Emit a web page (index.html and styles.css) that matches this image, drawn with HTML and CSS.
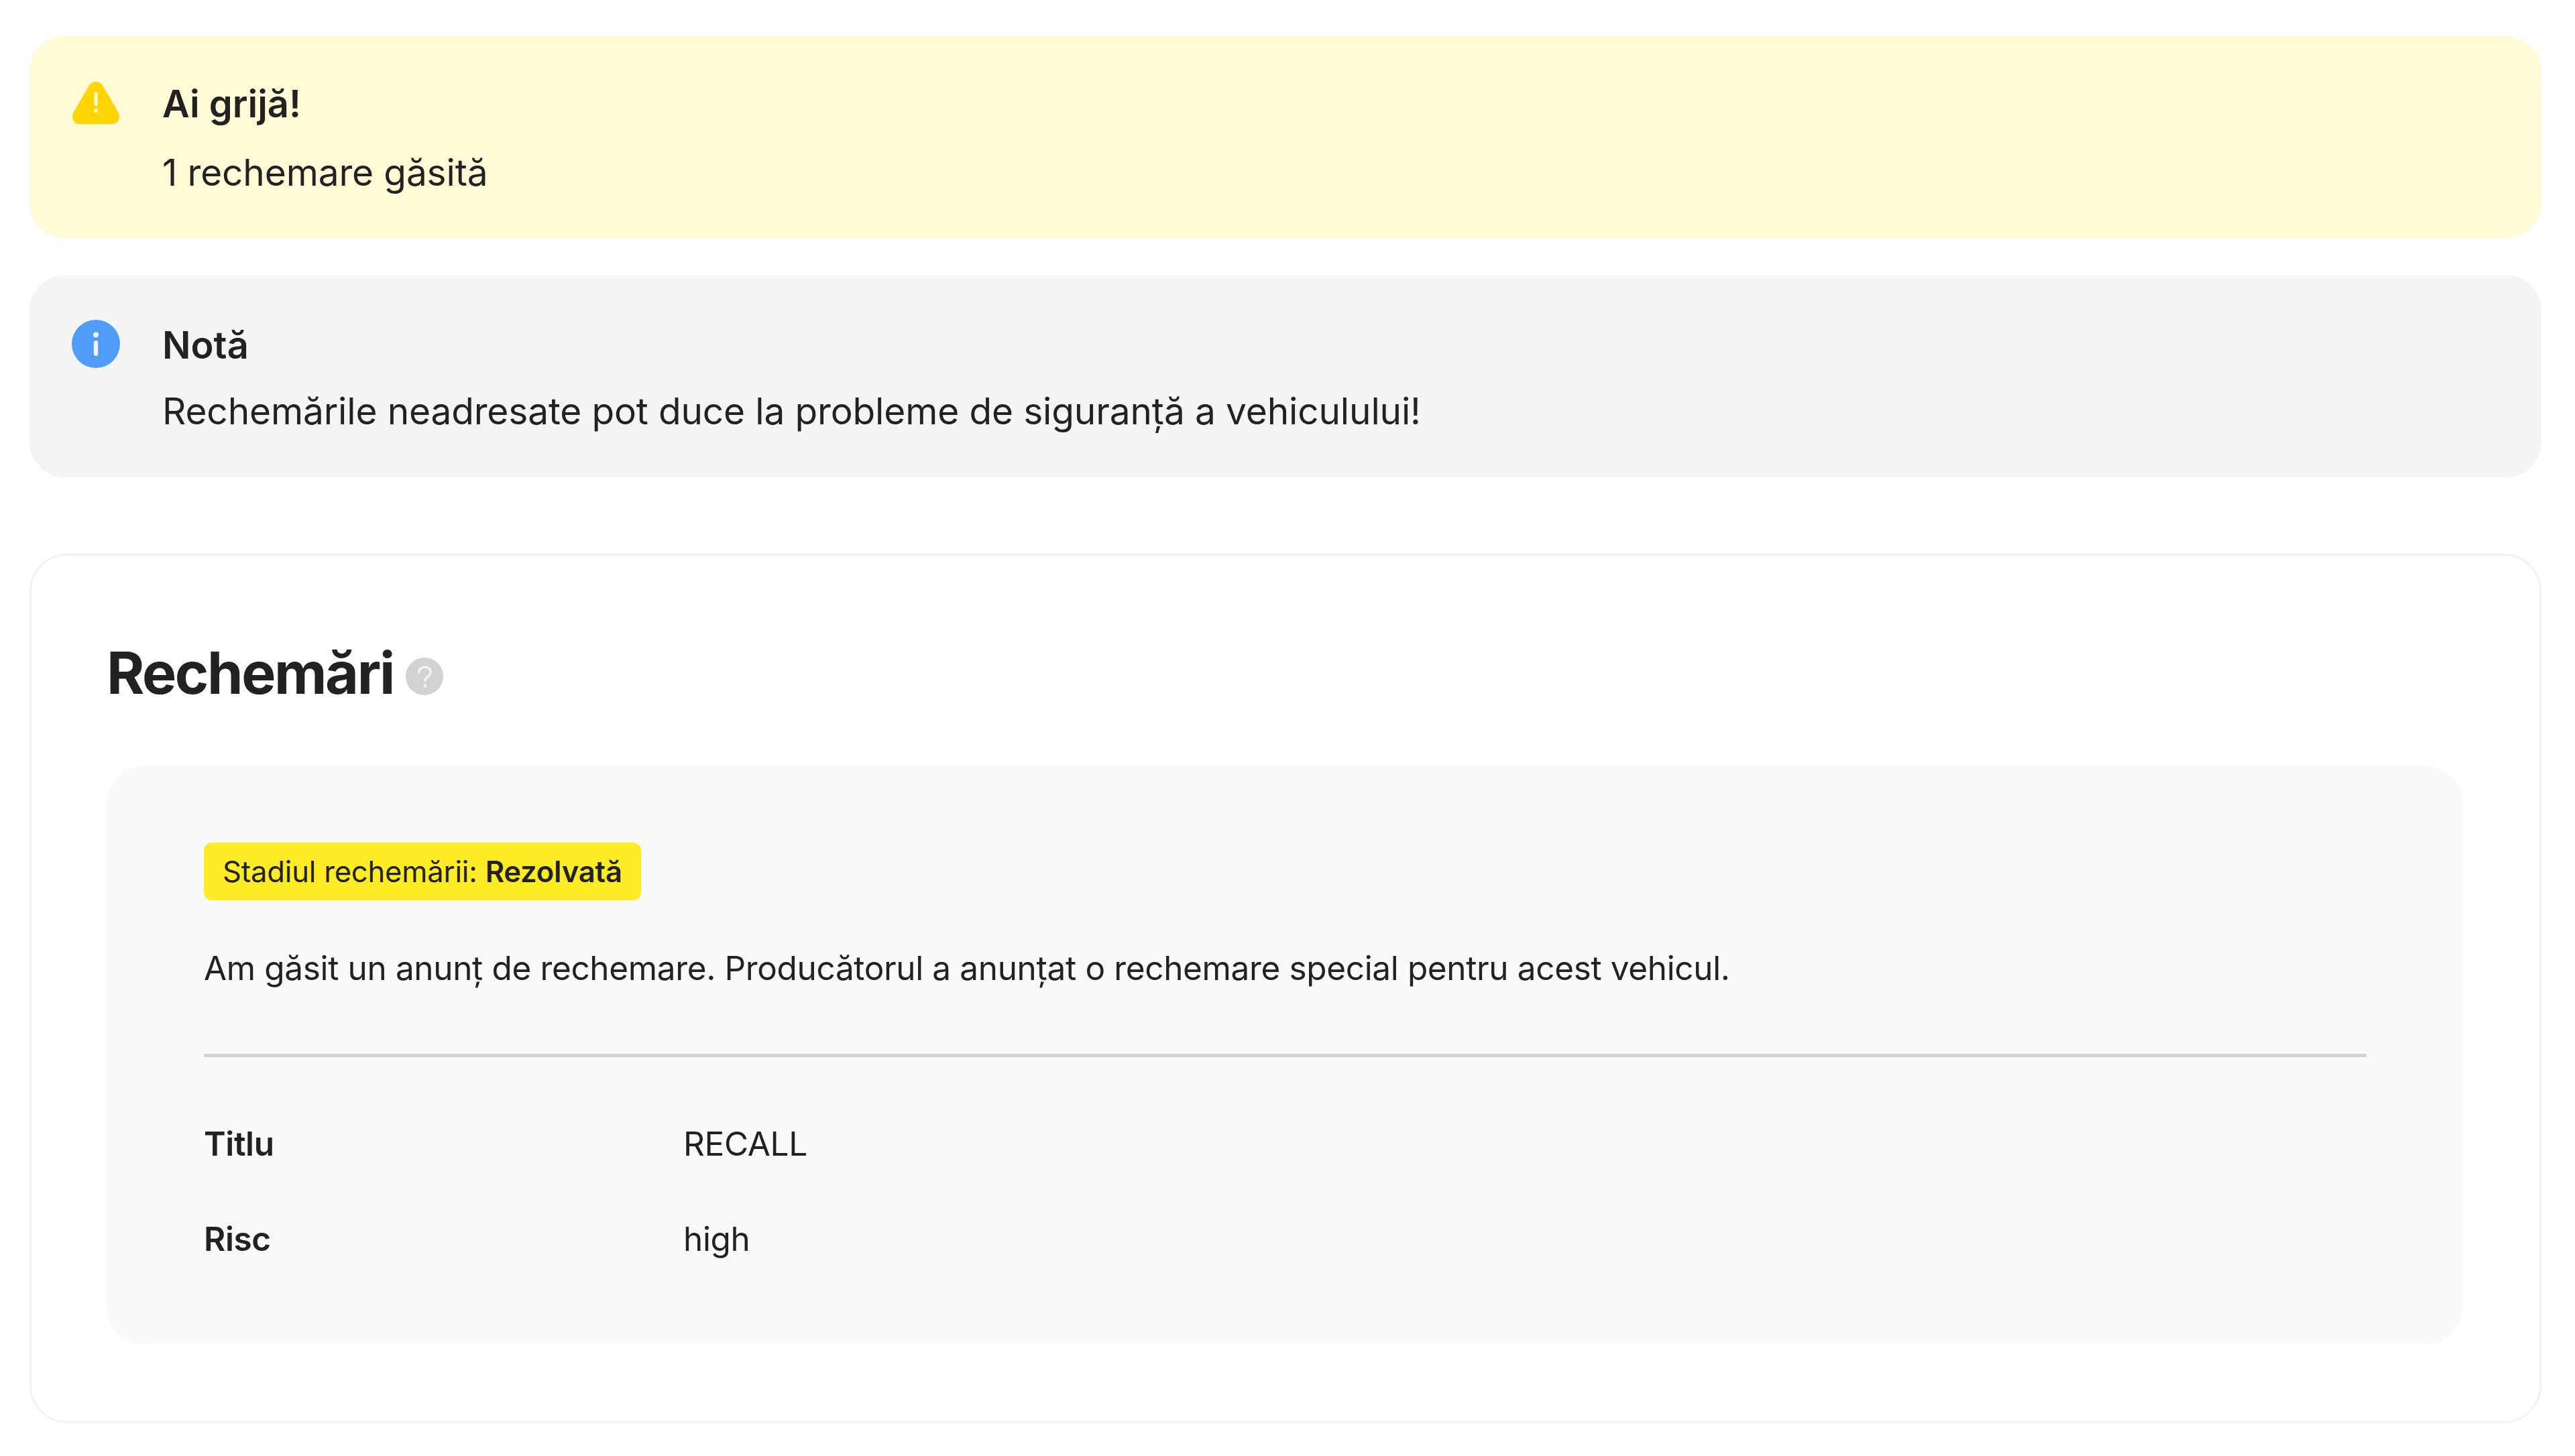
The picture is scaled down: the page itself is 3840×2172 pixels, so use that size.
FILE: index.html
```html
<!doctype html>
<html lang="ro">
<head>
  <meta charset="UTF-8">
  <title>Rechemări</title>
  <link rel="stylesheet" href="styles.css">
</head>
<body>
  <div class="alert alert-warn">
    <svg class="alert-icon" viewBox="0 0 72 72">
      <path d="M36 4c-5 0-8.500 2.500-11 7L3 49c-4.500 8-1 18 9 18h48c10 0 13.500-10 9-18L47 11c-2.500-4.500-6-7-11-7z" fill="#ffd400"/>
      <rect x="33.500" y="19" width="5" height="21" rx="2" fill="#fffbd6"/>
      <rect x="33.500" y="44" width="5" height="6" rx="1.500" fill="#fffbd6"/>
    </svg>
    <div class="alert-body">
      <div class="alert-title">Ai grijă!</div>
      <div class="alert-text">1 rechemare găsită</div>
    </div>
  </div>
  <div class="alert alert-info">
    <svg class="alert-icon" viewBox="0 0 72 72">
      <circle cx="36" cy="36" r="36" fill="#4f9cf9"/>
      <circle cx="36" cy="22.500" r="4" fill="#f4f4f4"/>
      <rect x="32.800" y="31" width="6.400" height="23" rx="3.200" fill="#f4f4f4"/>
    </svg>
    <div class="alert-body">
      <div class="alert-title">Notă</div>
      <div class="alert-text">Rechemările neadresate pot duce la probleme de siguranță a vehiculului!</div>
    </div>
  </div>
  <div class="card">
    <h2 class="card-title">Rechemări
      <svg class="help-icon" viewBox="0 0 56 56">
        <circle cx="28" cy="28" r="28" fill="#d2d2d2"/>
        <path d="M19.500 22c.5-5 4-8 8.800-8 5 0 8.700 3 8.700 7.500 0 3.500-2 5.200-4.500 7-2.300 1.700-3.500 3-3.500 6" fill="none" stroke="#f4f4f4" stroke-width="3.400" stroke-linecap="round"/>
        <circle cx="28.800" cy="42" r="2.400" fill="#f4f4f4"/>
      </svg>
    </h2>
    <div class="recall">
      <div class="status">Stadiul rechemării: <b>Rezolvată</b></div>
      <p class="recall-desc">Am găsit un anunț de rechemare. Producătorul a anunțat o rechemare special pentru acest vehicul.</p>
      <hr class="divider">
      <div class="row"><span class="row-label">Titlu</span><span>RECALL</span></div>
      <div class="row"><span class="row-label">Risc</span><span>high</span></div>
    </div>
  </div>
</body>
</html>
```

FILE: styles.css
```css
body {
  margin: 0;
  padding: 54px 50px 0 44px;
  background: #fff;
  color: #222;
  font-family: Inter, "Noto Sans", sans-serif;
}

.alert {
  display: flex;
  gap: 63px;
  height: 301px;
  box-sizing: border-box;
  padding: 66px 64px 0 63px;
  border-radius: 52px;
  margin-bottom: 56px;
}

.alert-warn {
  padding-top: 63px;
  background: #fffbd6;
}

.alert-info {
  background: #f4f4f4;
}

.alert-icon {
  flex: none;
  width: 72px;
  height: 72px;
}

.alert-warn .alert-icon {
  margin-top: 1px;
}

.alert-title {
  font-size: 56px;
  font-weight: 600;
  line-height: 76px;
  margin-bottom: 26px;
}

.alert-info .alert-title {
  margin-bottom: 22px;
}

.alert-text {
  font-size: 55px;
  letter-spacing: -0.15px;
  line-height: 76px;
}

.card {
  margin-top: 114px;
  border: 3px solid #f2f2f2;
  border-radius: 56px;
  padding: 125px 115px 0 112px;
  height: 1297px;
  box-sizing: border-box;
}

.card-title {
  display: flex;
  align-items: center;
  gap: 18px;
  margin: 0 0 88px;
  font-size: 86px;
  font-weight: 700;
  letter-spacing: -2.4px;
  line-height: 100px;
}

.help-icon {
  width: 56px;
  height: 56px;
  margin-top: 10px;
}

.recall {
  background: #f9f9f9;
  border-radius: 56px;
  padding: 115px 143px 0 145px;
  height: 864px;
  box-sizing: border-box;
}

.status {
  display: inline-block;
  background: #ffeb26;
  border-radius: 12px;
  padding: 0 28px;
  font-size: 43.500px;
  letter-spacing: -0.16px;
  line-height: 86px;
}

.status b {
  font-weight: 600;
}

.recall-desc {
  margin: 58px 0 0;
  font-size: 49.500px;
  letter-spacing: -0.36px;
  line-height: 86px;
}

.divider {
  margin: 85px 0 86px;
  border: 0;
  height: 5px;
  background: #d2d2d2;
}

.row {
  display: grid;
  grid-template-columns: 715px 1fr;
  font-size: 49.500px;
  letter-spacing: -0.36px;
  line-height: 86px;
  margin-bottom: 56px;
}

.row-label {
  font-weight: 600;
}
```
